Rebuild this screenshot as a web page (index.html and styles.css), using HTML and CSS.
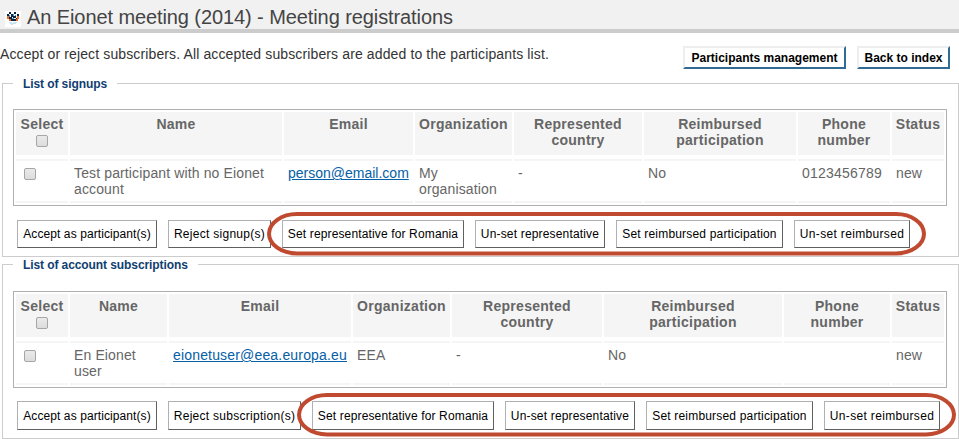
FILE: index.html
```html
<!DOCTYPE html>
<html lang="en">
<head>
<meta charset="utf-8">
<title>An Eionet meeting (2014) - Meeting registrations</title>
<link rel="stylesheet" href="styles.css">
</head>
<body>
<header class="title-bar">
  <svg class="logo" width="16" height="16" viewBox="0 0 16 16" shape-rendering="crispEdges">
    <rect width="16" height="16" fill="#fff"/>
    <path fill="#0b2545" d="M4 1h2v2h-2zM9 1h2v2h-2zM2 3h2v2h-2zM12 3h2v2h-2zM6 3h2v3h-2zM4 6h3v2h-3zM8 5h3v2h-3zM6 8h5v2h-5zM11 7h1v1h-1z"/>
    <path fill="#f26a22" d="M2 5h2v3h-2zM12 5h2v3h-2zM4 8h2v2h-2zM11 8h2v2h-2z"/>
    <path fill="#4c96d0" d="M4 4h1v2h-1zM8 3h1v2h-1zM7 7h2v1h-2zM10 4h1v1h-1z"/>
    <path fill="#c5e4f2" d="M4 11h3v1h-3zM8 11h4v1h-4zM5 12h6v1h-6z"/>
    <path fill="#f3cfd3" d="M6 13h2v1h-2z"/>
  </svg>
  <h1>An Eionet meeting (2014) - Meeting registrations</h1>
</header>
<div class="intro">
  <p>Accept or reject subscribers. All accepted subscribers are added to the participants list.</p>
  <nav><a class="nav-button manage">Participants management</a><a class="nav-button back">Back to index</a></nav>
</div>

<fieldset class="signups">
  <legend>List of signups</legend>
  <div class="grid">
    <div class="th select">Select<i class="check"></i></div>
    <div class="th">Name</div><div class="th">Email</div><div class="th">Organization</div>
    <div class="th">Represented<br>country</div><div class="th">Reimbursed<br>participation</div>
    <div class="th">Phone<br>number</div><div class="th">Status</div>
    <div class="td pick"><i class="check"></i></div>
    <div class="td">Test participant with no Eionet<br>account</div>
    <div class="td"><a class="mail">person@email.com</a></div>
    <div class="td">My<br>organisation</div><div class="td">-</div><div class="td">No</div>
    <div class="td phone">0123456789</div><div class="td">new</div>
  </div>
  <div class="actions">
    <button class="accept">Accept as participant(s)</button><button class="reject">Reject signup(s)</button><button class="set-rep">Set representative for Romania</button><button class="unset-rep">Un-set representative</button><button class="set-reimb">Set reimbursed participation</button><button class="unset-reimb">Un-set reimbursed</button>
    <svg class="ring" width="662" height="46" viewBox="0 0 662 46"><rect x="3" y="3" width="655" height="39.5" rx="28" ry="19.75"/></svg>
  </div>
</fieldset>

<fieldset class="accounts">
  <legend>List of account subscriptions</legend>
  <div class="grid">
    <div class="th select">Select<i class="check"></i></div>
    <div class="th">Name</div><div class="th">Email</div><div class="th">Organization</div>
    <div class="th">Represented<br>country</div><div class="th">Reimbursed<br>participation</div>
    <div class="th">Phone<br>number</div><div class="th">Status</div>
    <div class="td pick"><i class="check"></i></div>
    <div class="td">En Eionet<br>user</div>
    <div class="td"><a class="mail">eionetuser@eea.europa.eu</a></div>
    <div class="td">EEA</div><div class="td">-</div><div class="td">No</div>
    <div class="td"></div><div class="td">new</div>
  </div>
  <div class="actions">
    <button class="accept">Accept as participant(s)</button><button class="reject">Reject subscription(s)</button><button class="set-rep">Set representative for Romania</button><button class="unset-rep">Un-set representative</button><button class="set-reimb">Set reimbursed participation</button><button class="unset-reimb">Un-set reimbursed</button>
    <svg class="ring" width="662" height="46" viewBox="0 0 662 46"><rect x="3" y="3" width="655" height="39.5" rx="28" ry="19.75"/></svg>
  </div>
</fieldset>
</body>
</html>
```
FILE: styles.css
```css
* { box-sizing: border-box; }
body {
  margin: 0;
  width: 959px;
  height: 439px;
  overflow: hidden;
  background: #fff;
  color: #333;
  font-family: "Liberation Sans", Arial, sans-serif;
  font-size: 14px;
}
.title-bar {
  display: flex;
  height: 33px;
  padding-left: 5px;
  background: #f1f1f1;
  border-bottom: 4px solid #ccc;
}
.logo { margin-top: 11px; }
h1 {
  margin: 5px 0 0 6px;
  font-size: 20px;
  font-weight: normal;
  line-height: 24px;
  letter-spacing: -.09px;
  color: #444;
  white-space: nowrap;
}
.intro {
  display: flex;
  justify-content: space-between;
  height: 44px;
  padding-right: 9px;
}
.intro p { margin: 13px 0 0; line-height: 16px; letter-spacing: .125px; white-space: nowrap; }
nav { display: flex; gap: 11px; padding-top: 13px; }
.nav-button {
  height: 23px;
  border: 2px solid;
  border-color: #eee #2f6b92 #2f6b92 #eee;
  color: #000;
  font-size: 12px;
  font-weight: bold;
  line-height: 20px;
  text-align: center;
  white-space: nowrap;
}
.manage { width: 163px; }
.back { width: 93px; }
fieldset {
  width: 957px;
  height: 180px;
  margin: 0 0 0 2px;
  padding: 0 0 0 10px;
  border: 1px solid #ccc;
}
.accounts { height: 181px; margin-top: 1px; }
legend {
  height: 13px;
  padding: 0 10px;
  color: #0f3e70;
  font-size: 12px;
  font-weight: bold;
  line-height: 15px;
  letter-spacing: -.09px;
}
.grid {
  display: grid;
  grid-template-rows: 43px 44px;
  gap: 4px 2px;
  width: 934px;
  height: 97px;
  margin-top: 19px;
  padding: 2px;
  border: 1px solid #b0b0b0;
  color: #666;
  line-height: 16px;
  white-space: nowrap;
}
.accounts .grid { margin-top: 20px; }
.signups .grid { grid-template-columns: 52px 212px 129px 97px 128px 152px 92px 52px; }
.accounts .grid { grid-template-columns: 52px 97px 182px 97px 150px 178px 106px 52px; }
.th { padding-top: 4px; background: #f5f5f5; font-weight: bold; letter-spacing: .27px; text-align: center; }
.td { padding: 4px 0 0 4px; border-top: 2px solid #f5f5f5; border-bottom: 2px solid #f5f5f5; letter-spacing: .13px; }
.check {
  display: block;
  width: 12px;
  height: 12px;
  border: 1px solid #a6a6a6;
  border-radius: 2px;
  background: linear-gradient(#eaeaea, #dcdcdc);
}
.select .check { margin: 3px auto 0; }
.pick .check { margin: 3px 0 0 4px; }
.mail { color: #0560a6; text-decoration: underline; }
.signups .mail { letter-spacing: 0; }
.accounts .mail { letter-spacing: .17px; }
.phone { letter-spacing: .22px; }
.actions { position: relative; display: flex; gap: 11px; padding: 14px 0 0 4px; }
.accounts .actions { padding-top: 13px; }
button {
  height: 28px;
  padding: 0;
  border: 1px solid;
  border-color: #b0b0b0 #606060 #606060 #b0b0b0;
  background: #fff;
  color: #000;
  font: 12px/26px "Liberation Sans", Arial, sans-serif;
  white-space: nowrap;
}
.accounts button { height: 29px; }
.accept { width: 140px; letter-spacing: .09px; }
.reject { width: 103px; letter-spacing: .28px; }
.accounts .reject { width: 133px; }
.set-rep { width: 182px; letter-spacing: .14px; }
.unset-rep { width: 130px; letter-spacing: .17px; }
.set-reimb { width: 167px; letter-spacing: .18px; }
.unset-reimb { width: 116px; letter-spacing: .33px; }
.ring { position: absolute; left: 253px; top: 5px; }
.accounts .ring { left: 283px; top: 4px; }
.ring rect { fill: none; stroke: #c04a30; stroke-width: 4; }
```
